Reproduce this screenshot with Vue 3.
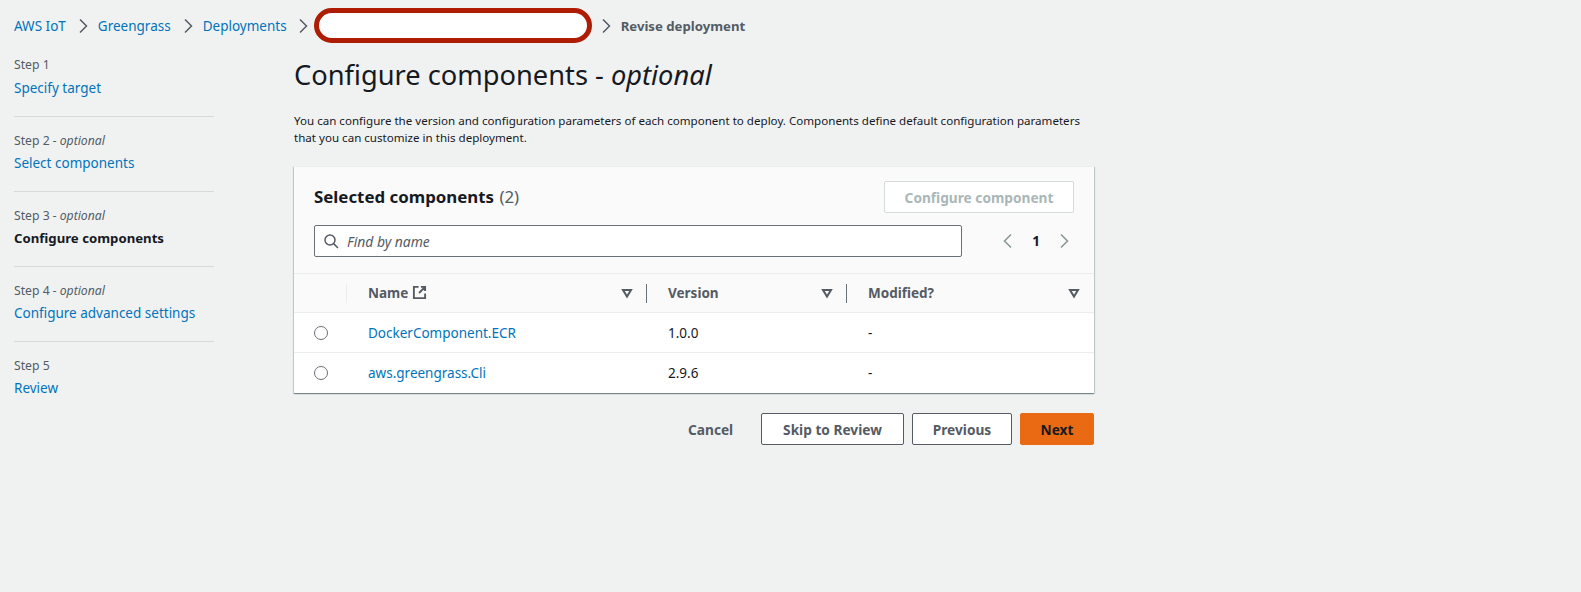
<template>
  <div class="page">
    <nav class="crumbs">
      <a class="link">AWS IoT</a>
      <svg class="chev" viewBox="0 0 16 16"><path d="M5 1.5 11.5 8 5 14.5" /></svg>
      <a class="link">Greengrass</a>
      <svg class="chev" viewBox="0 0 16 16"><path d="M5 1.5 11.5 8 5 14.5" /></svg>
      <a class="link">Deployments</a>
      <svg class="chev before-pill" viewBox="0 0 16 16"><path d="M5 1.5 11.5 8 5 14.5" /></svg>
      <div class="redacted"></div>
      <svg class="chev after-pill" viewBox="0 0 16 16"><path d="M5 1.5 11.5 8 5 14.5" /></svg>
      <span class="current">Revise deployment</span>
    </nav>

    <div class="body">
      <ul class="steps">
        <li v-for="(s, i) in steps" :key="s.name" class="step" :class="{ first: i == 0 }">
          <div class="step-label">Step {{ i + 1 }}<i v-if="s.optional"> - optional</i></div>
          <a class="step-name" :class="{ active: s.active }">{{ s.name }}</a>
        </li>
      </ul>

      <main class="main">
        <h1 class="title">Configure components - <i>optional</i></h1>
        <p class="desc">
          You can configure the version and configuration parameters of each component to deploy. Components define default configuration parameters that you can customize in this deployment.
        </p>

        <section class="card">
          <div class="card-head">
            <div class="head-row">
              <h2 class="card-title">Selected components <span class="count">(2)</span></h2>
              <button class="btn-disabled">Configure component</button>
            </div>
            <div class="filter-row">
              <div class="search">
                <svg class="search-icon" viewBox="0 0 16 16"><circle cx="7" cy="7" r="5" /><path d="M10.6 10.6 15 15" /></svg>
                <span class="placeholder">Find by name</span>
              </div>
              <div class="pager">
                <svg class="pager-chev" viewBox="0 0 16 16"><path d="M11 1.5 4.5 8l6.5 6.5" /></svg>
                <span class="page-num">1</span>
                <svg class="pager-chev" viewBox="0 0 16 16"><path d="M5 1.5 11.5 8 5 14.5" /></svg>
              </div>
            </div>
          </div>

          <div class="row thead">
            <div class="cell sel"><span class="sep light"></span></div>
            <div class="cell th">
              <span class="th-text">Name
                <svg class="ext" viewBox="0 0 16 16"><path d="M7 2H2v12h12V9M9.5 2H14v4.5M14 2 7.5 8.5" /></svg>
              </span>
              <svg class="caret" viewBox="0 0 12 12"><path d="M2 3h8L6 9.5z" /></svg>
              <span class="sep"></span>
            </div>
            <div class="cell th">
              <span class="th-text">Version</span>
              <svg class="caret" viewBox="0 0 12 12"><path d="M2 3h8L6 9.5z" /></svg>
              <span class="sep"></span>
            </div>
            <div class="cell th">
              <span class="th-text">Modified?</span>
              <svg class="caret" viewBox="0 0 12 12"><path d="M2 3h8L6 9.5z" /></svg>
            </div>
          </div>
          <div v-for="r in rows" :key="r.name" class="row tr">
            <div class="cell sel"><span class="radio"></span></div>
            <div class="cell"><a class="link">{{ r.name }}</a></div>
            <div class="cell">{{ r.version }}</div>
            <div class="cell">-</div>
          </div>
        </section>

        <div class="actions">
          <button class="btn plain">Cancel</button>
          <button class="btn normal skip">Skip to Review</button>
          <button class="btn normal prev">Previous</button>
          <button class="btn primary">Next</button>
        </div>
      </main>
    </div>
  </div>
</template>

<script setup>
const steps = [
  { name: "Specify target" },
  { name: "Select components", optional: true },
  { name: "Configure components", optional: true, active: true },
  { name: "Configure advanced settings", optional: true },
  { name: "Review" },
];
const rows = [
  { name: "DockerComponent.ECR", version: "1.0.0" },
  { name: "aws.greengrass.Cli", version: "2.9.6" },
];
</script>

<style>
html,
body {
  margin: 0;
  background: #f0f2f2;
}
</style>

<style scoped>
.page {
  width: 1581px;
  height: 592px;
  box-sizing: border-box;
  padding: 8px 0 0 14px;
  background: #f0f2f2;
  font-family: "Noto Sans", "Open Sans", sans-serif;
  font-size: 13.5px;
  color: #16191f;
  overflow: hidden;
}
.link {
  color: #0073bb;
}
.crumbs {
  display: flex;
  align-items: center;
  height: 35px;
}
.chev {
  width: 16px;
  height: 16px;
  margin: 0 7px 0 9px;
  fill: none;
  stroke: #545b64;
  stroke-width: 1.5;
}
.chev.before-pill {
  margin: 0 3px 0 8px;
}
.chev.after-pill {
  margin-left: 6px;
}
.redacted {
  width: 268px;
  height: 25px;
  background: #fff;
  border: 5px solid #ad1c03;
  border-radius: 18px;
}
.current {
  color: #545b64;
  font-weight: 700;
  font-size: 13.2px;
}
.body {
  display: flex;
  margin-top: 11px;
}
.steps {
  list-style: none;
  margin: 0;
  padding: 0;
  width: 200px;
  flex: none;
}
.step {
  border-top: 1px solid #d5dbdb;
  padding-top: 16px;
  height: 58px;
}
.step.first {
  border-top: 0;
  padding-top: 3px;
  height: 59px;
}
.step-label {
  color: #545b64;
  font-size: 12.2px;
  line-height: 16px;
}
.step-name {
  display: block;
  margin-top: 5px;
  line-height: 18px;
  color: #0073bb;
}
.first .step-name {
  margin-top: 6px;
}
.step-name.active {
  color: #16191f;
  font-weight: 700;
  font-size: 13.2px;
}
.main {
  width: 800px;
  margin-left: 80px;
}
.title {
  margin: 3px 0 0;
  font-size: 27.25px;
  font-weight: 400;
  line-height: 36px;
}
.desc {
  margin: 19px 0 0;
  font-size: 11.58px;
  line-height: 17px;
  color: #16191f;
}
.card {
  margin-top: 20px;
  background: #fff;
  box-shadow: 0 1px 1px 0 rgba(0, 28, 36, 0.3), 1px 1px 1px 0 rgba(0, 28, 36, 0.15), -1px 1px 1px 0 rgba(0, 28, 36, 0.15);
  border-top: 1px solid #eaeded;
}
.card-head {
  background: #fafafa;
  padding: 14px 20px 16px;
}
.head-row {
  display: flex;
  justify-content: space-between;
  align-items: center;
}
.card-title {
  margin: 0 0 2px;
  font-size: 16.85px;
  font-weight: 700;
}
.count {
  margin-left: 1px;
  font-weight: 400;
  color: #545b64;
}
.btn-disabled {
  width: 190px;
  height: 32px;
  background: #fff;
  border: 1px solid #d5dbdb;
  border-radius: 2px;
  color: #aab7b8;
  font: 700 13.7px "Noto Sans", sans-serif;
}
.filter-row {
  display: flex;
  align-items: center;
  margin-top: 12px;
}
.search {
  width: 648px;
  height: 32px;
  box-sizing: border-box;
  display: flex;
  align-items: center;
  gap: 8px;
  padding-left: 8px;
  background: #fff;
  border: 1px solid #687078;
  border-radius: 2px;
}
.search-icon {
  width: 16px;
  height: 16px;
  fill: none;
  stroke: #545b64;
  stroke-width: 1.5;
}
.placeholder {
  font-style: italic;
  font-size: 13.9px;
  color: #545b64;
}
.pager {
  display: flex;
  align-items: center;
  margin-left: 38px;
}
.pager-chev {
  width: 16px;
  height: 16px;
  fill: none;
  stroke: #879596;
  stroke-width: 1.5;
}
.page-num {
  width: 40px;
  text-align: center;
  font-weight: 700;
}
.row {
  display: grid;
  grid-template-columns: 53px 300px 200px 247px;
  align-items: center;
}
.thead {
  height: 38px;
  background: #fafafa;
  border-top: 1px solid #eaeded;
  border-bottom: 1px solid #eaeded;
}
.tr {
  height: 39px;
  background: #fff;
  border-bottom: 1px solid #eaeded;
}
.tr:last-child {
  height: 40px;
  border-bottom: 0;
}
.cell {
  padding-left: 21px;
  position: relative;
  box-sizing: border-box;
}
.cell.sel {
  padding-left: 20px;
  display: flex;
  align-items: center;
  height: 19px;
}
.row.tr .cell.sel {
  height: auto;
}
.th {
  display: flex;
  align-items: center;
  justify-content: space-between;
  padding-right: 14px;
  height: 19px;
  font-weight: 700;
  color: #545b64;
}
.th-text {
  display: flex;
  align-items: center;
  gap: 4px;
  padding-bottom: 1px;
}
.ext {
  width: 15px;
  height: 15px;
  fill: none;
  stroke: #545b64;
  stroke-width: 2;
}
.caret {
  width: 12px;
  height: 12px;
  fill: none;
  stroke: #545b64;
  stroke-width: 2;
}
.sep {
  position: absolute;
  right: 0;
  top: 0;
  width: 1px;
  height: 19px;
  background: #687078;
}
.sep.light {
  background: #eaeded;
}
.radio {
  width: 12px;
  height: 12px;
  border: 1px solid #687078;
  border-radius: 50%;
  background: #fff;
}
.actions {
  display: flex;
  justify-content: flex-end;
  align-items: center;
  gap: 8px;
  margin-top: 20px;
}
.btn {
  height: 32px;
  box-sizing: border-box;
  border-radius: 2px;
  font: 700 13.7px "Noto Sans", sans-serif;
  color: #545b64;
  background: #fff;
  border: 1px solid #545b64;
  padding: 0;
}
.plain {
  background: none;
  border: 0;
  width: 44px;
  margin-right: 21px;
}
.skip {
  width: 143px;
}
.prev {
  width: 100px;
}
.primary {
  width: 74px;
  background: #ea6a13;
  border-color: #ea6a13;
  color: #16191f;
}
</style>
